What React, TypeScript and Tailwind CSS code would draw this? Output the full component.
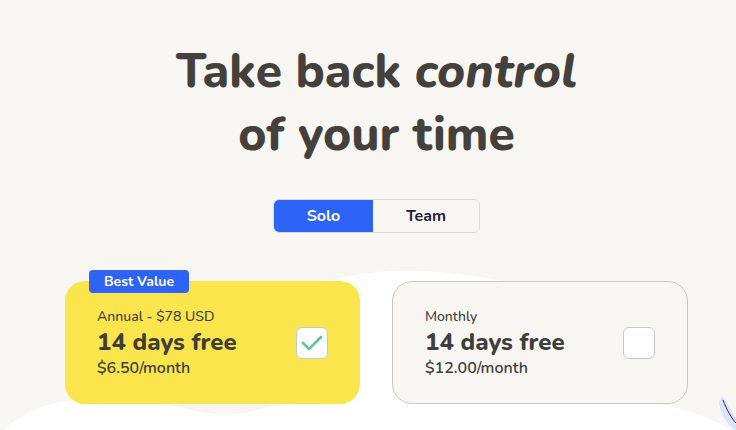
import React, { useState } from 'react';

type Plan = {
  id: string;
  label: string;
  headline: string;
  price: string;
  badge?: string;
};

const plans: Plan[] = [
  { id: 'annual', label: 'Annual - $78 USD', headline: '14 days free', price: '$6.50/month', badge: 'Best Value' },
  { id: 'monthly', label: 'Monthly', headline: '14 days free', price: '$12.00/month' },
];

const font = { fontFamily: '"Nunito", "Lato", "Noto Sans", sans-serif' };

const Backdrop: React.FC = () => (
  <svg className="absolute inset-0 pointer-events-none" width="736" height="430" viewBox="0 0 736 430">
    <path
      d="M0 434 C20 412 50 399 100 398 C150 397 180 410 215 414 C245 417 262 406 292 404 L292 292 C330 276 380 269 420 271 C520 275 620 310 660 340 L660 404 C690 410 716 420 742 436 Z"
      fill="#ffffff"
    />
    <path d="M722 396 C728 404 734 414 738 424 L738 432 C728 426 720 414 719 402 Z" fill="#dfe1fa" />
    <path d="M723 400 C727 410 731 418 737 424" stroke="#2b2b3a" strokeWidth="1" fill="none" />
  </svg>
);

const PlanCard: React.FC<{ plan: Plan; selected: boolean; onSelect: () => void }> = ({ plan, selected, onSelect }) => (
  <button
    onClick={onSelect}
    className={
      selected
        ? 'relative w-[295px] h-[123px] rounded-[20px] bg-[#fbe54c] flex items-center justify-between px-8 text-left'
        : 'relative w-[296px] h-[123px] rounded-[20px] bg-[#f7f6f3] border border-[#c9c7c3] flex items-center justify-between px-8 text-left'
    }
  >
    {plan.badge && (
      <span className="absolute -top-[11px] left-6 w-[100px] h-[23px] rounded-[4px] bg-[#2d63f6] text-white text-[14px] font-bold flex items-center justify-center">
        {plan.badge}
      </span>
    )}
    <div className="flex flex-col text-[#403e3a]">
      <span className="text-[14px] leading-[20px] font-medium">{plan.label}</span>
      <span className="text-[24px] leading-[30px] font-extrabold">{plan.headline}</span>
      <span className="text-[16px] leading-[22px] font-semibold">{plan.price}</span>
    </div>
    <span className="w-8 h-8 rounded-[6px] bg-white border border-[#c9c7c3] flex items-center justify-center">
      {selected && (
        <svg width="22" height="18" viewBox="0 0 22 18">
          <path d="M2 9 L8 15 L20 3" stroke="#5dc596" strokeWidth="2.6" fill="none" strokeLinecap="round" strokeLinejoin="round" />
        </svg>
      )}
    </span>
  </button>
);

const App: React.FC = () => {
  const [mode, setMode] = useState<'solo' | 'team'>('solo');
  const [plan, setPlan] = useState('annual');

  return (
    <div className="relative w-[736px] h-[430px] overflow-hidden bg-[#f7f6f3]" style={font}>
      <Backdrop />
      <div className="relative flex flex-col items-center pl-[17px] pt-[40px]">
        <h1 className="text-center text-[48px] leading-[63px] font-extrabold text-[#44413c]">
          Take back <em className="italic">control</em>
          <br />
          of your time
        </h1>

        <div className="mt-[33px] flex h-[34px] rounded-[6px] border border-[#dcdad6] overflow-hidden">
          <button
            onClick={() => setMode('solo')}
            className={
              mode === 'solo'
                ? 'w-[99px] bg-[#2d63f6] text-white text-[16px] font-bold'
                : 'w-[99px] bg-[#f7f6f3] text-[#22203a] text-[16px] font-bold'
            }
          >
            Solo
          </button>
          <button
            onClick={() => setMode('team')}
            className={
              mode === 'team'
                ? 'w-[106px] bg-[#2d63f6] text-white text-[16px] font-bold'
                : 'w-[106px] bg-[#f7f6f3] text-[#22203a] text-[16px] font-bold'
            }
          >
            Team
          </button>
        </div>

        <div className="mt-[48px] flex gap-8">
          {plans.map(p => (
            <PlanCard key={p.id} plan={p} selected={plan === p.id} onSelect={() => setPlan(p.id)} />
          ))}
        </div>
      </div>
    </div>
  );
};

export default App;
